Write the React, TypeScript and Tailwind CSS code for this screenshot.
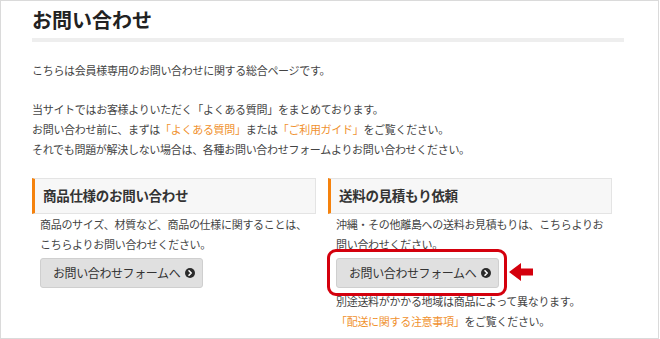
import React from "react";

function CircleChevron() {
  return (
    <svg width="10" height="10" viewBox="0 0 10 10" className="shrink-0">
      <circle cx="5" cy="5" r="5" fill="#2b2b2b" />
      <path d="M4 2.8 L6.2 5 L4 7.2" stroke="#fff" strokeWidth="1.6" fill="none" strokeLinecap="round" strokeLinejoin="round" />
    </svg>
  );
}

function FormButton() {
  return (
    <div className="flex items-center w-[163px] h-[30px] pl-[12px] gap-[5px] bg-[#e0e0e0] border border-[#cfcfcf] rounded-[3px] text-[12px] tracking-[-0.4px] text-[#333] leading-none">
      <span>お問い合わせフォームへ</span>
      <CircleChevron />
    </div>
  );
}

function BoxHeader({ children }: { children: React.ReactNode }) {
  return (
    <div className="h-[36px] flex items-center bg-[#f7f7f7] border border-[#e4e4e4] border-l-[3px] border-l-[#f5820d] pl-[8px] text-[13.5px] font-bold text-[#333] leading-none">
      {children}
    </div>
  );
}

export default function App() {
  const orange = "text-[#f0912e]";
  return (
    <div className="w-[660px] h-[339px] bg-white font-['Noto_Sans_CJK_JP',sans-serif] overflow-hidden">
      <div className="w-[659px] h-[339px] border border-[#dadada] pl-[31px] pr-[34px] pt-[5px]">
        <h1 className="text-[20px] font-bold leading-[28px] text-[#222]">お問い合わせ</h1>
        <div className="mt-[4px] h-[4px] bg-[#eeeeee]" />
        <div className="text-[11px] tracking-[-0.3px] leading-[20px] text-[#444]">
          <p className="mt-[18px]">こちらは会員様専用のお問い合わせに関する総合ページです。</p>
          <div className="mt-[19px]">
            <p>当サイトではお客様よりいただく「よくある質問」をまとめております。</p>
            <p>
              お問い合わせ前に、まずは<span className={orange}>「よくある質問」</span>または
              <span className={orange}>「ご利用ガイド」</span>をご覧ください。
            </p>
            <p>それでも問題が解決しない場合は、各種お問い合わせフォームよりお問い合わせください。</p>
          </div>
          <div className="mt-[19px] grid grid-cols-2">
            <div className="pr-[12px]">
              <BoxHeader>商品仕様のお問い合わせ</BoxHeader>
              <div className="pl-[8px]">
                <p>商品のサイズ、材質など、商品の仕様に関することは、</p>
                <p>こちらよりお問い合わせください。</p>
                <div className="mt-[4px]">
                  <FormButton />
                </div>
              </div>
            </div>
            <div className="pr-[12px]">
              <BoxHeader>送料の見積もり依頼</BoxHeader>
              <div className="pl-[8px]">
                <p>沖縄・その他離島への送料お見積もりは、こちらよりお</p>
                <p>問い合わせください。</p>
                <div className="mt-[4px] relative w-[163px]">
                  <FormButton />
                  <div className="absolute left-[-9px] right-[-8px] top-[-9px] bottom-[-8px] border-[3px] border-[#d4000d] rounded-[9px]" />
                  <svg className="absolute left-[173px] top-[3px]" width="25" height="22" viewBox="0 0 25 22">
                    <polygon points="0,11 12,2 12,7.5 24,7.5 24,14.5 12,14.5 12,20" fill="#d4000d" />
                  </svg>
                </div>
                <p className="mt-[3px]">別途送料がかかる地域は商品によって異なります。</p>
                <p>
                  <span className={orange}>「配送に関する注意事項」</span>をご覧ください。
                </p>
              </div>
            </div>
          </div>
        </div>
      </div>
    </div>
  );
}
